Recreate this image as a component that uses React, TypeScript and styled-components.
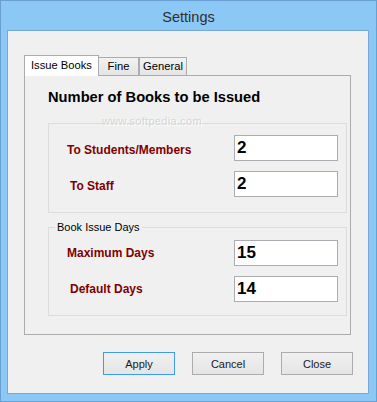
import React from 'react';
import styled, { createGlobalStyle } from 'styled-components';

const GlobalStyle = createGlobalStyle`
  html, body {
    margin: 0;
    padding: 0;
    background: #ffffff;
  }
  body {
    font-family: "Liberation Sans", Arial, sans-serif;
  }
  * {
    box-sizing: border-box;
  }
`;

const Window = styled.div`
  width: 377px;
  height: 402px;
  background-color: #8cc8f6;
  border: 1px solid #6a9fd2;
  display: flex;
  flex-direction: column;
`;

const TitleBar = styled.div`
  height: 29px;
  display: flex;
  align-items: center;
  justify-content: center;
  padding-top: 2px;
  font-size: 14.5px;
  color: #2e2e2e;
`;

const ClientArea = styled.div`
  flex: 1;
  margin: 0 7px 7px 6px;
  border: 1px solid #79a8d6;
  background-color: #f0f0f0;
  padding: 24px 15px 0 16px;
  display: flex;
  flex-direction: column;
`;

const TabStrip = styled.div`
  display: flex;
  align-items: flex-end;
  height: 21px;
  margin-bottom: -1px;
  position: relative;
  z-index: 1;
`;

const Tab = styled.div<{ $active?: boolean; $width: number; $overlap?: boolean }>`
  width: ${p => p.$width}px;
  height: ${p => (p.$active ? 21 : 19)}px;
  margin-left: ${p => (p.$overlap ? -1 : 0)}px;
  border: 1px solid #acacac;
  border-bottom: ${p => (p.$active ? 'none' : '1px solid #acacac')};
  background: ${p => (p.$active ? '#ffffff' : 'linear-gradient(#f2f2f2, #e4e4e4)')};
  font-size: 11.2px;
  color: #000;
  display: flex;
  align-items: center;
  justify-content: center;
  padding-bottom: ${p => (p.$active ? 2 : 1)}px;
`;

const TabPanel = styled.div`
  width: 327px;
  height: 260px;
  border: 1px solid #acacac;
  background-color: #f0f0f0;
  padding: 13px 3px 0 23px;
  position: relative;
  display: flex;
  flex-direction: column;
`;

const Heading = styled.div`
  font-size: 14.7px;
  line-height: 17px;
  font-weight: bold;
  color: #000;
  margin-bottom: 17px;
`;

const Watermark = styled.div`
  position: absolute;
  left: 77px;
  top: 39px;
  font-size: 11px;
  letter-spacing: 0.3px;
  color: #d6d6d6;
  text-shadow: 1px 1px 0 #ffffff;
  pointer-events: none;
`;

const GroupBox = styled.fieldset<{ $pad: string; $spaceAbove?: number }>`
  margin: ${p => p.$spaceAbove ?? 0}px 0 0 0;
  padding: ${p => p.$pad};
  border: 1px solid #dcdcdc;
  min-width: 0;
  display: flex;
  flex-direction: column;
  gap: 10px;
`;

const Legend = styled.legend`
  margin-left: 6px;
  padding: 0 2px;
  font-size: 11px;
  line-height: 14px;
  color: #000;
`;

const FieldRow = styled.div`
  display: grid;
  grid-template-columns: 1fr 104px;
  align-items: center;
  padding: 0 8px 0 18px;
`;

const FieldLabel = styled.label<{ $indent?: number; $shift?: number }>`
  font-size: 12px;
  font-weight: bold;
  color: #800000;
  padding-left: ${p => p.$indent ?? 0}px;
  margin-top: ${p => p.$shift ?? 0}px;
`;

const NumberInput = styled.input`
  width: 104px;
  height: 26px;
  border: 1px solid #abadb3;
  background: #ffffff;
  padding: 0 2px;
  font-family: "Liberation Sans", Arial, sans-serif;
  font-size: 17px;
  font-weight: bold;
  color: #000;
  outline: none;
`;

const ButtonRow = styled.div`
  display: flex;
  justify-content: flex-end;
  gap: 17px;
  margin-top: 17px;
`;

const DialogButton = styled.button<{ $focused?: boolean }>`
  width: 72px;
  height: 23px;
  border: 1px solid ${p => (p.$focused ? '#3c9af0' : '#acacac')};
  background: linear-gradient(#f0f0f0, #e5e5e5);
  font-family: "Liberation Sans", Arial, sans-serif;
  font-size: 11px;
  color: #1a1a1a;
  padding: 0;
  cursor: pointer;
`;

const studentFields = [
  { label: 'To Students/Members', value: '2', indent: 0, shift: 3 },
  { label: 'To Staff', value: '2', indent: 3, shift: 3 },
];

const dayFields = [
  { label: 'Maximum Days', value: '15', indent: 0, shift: -1 },
  { label: 'Default Days', value: '14', indent: 3, shift: 0 },
];

const App = () => {
  const renderRows = (rows: typeof studentFields) =>
    rows.map(r => (
      <FieldRow key={r.label}>
        <FieldLabel $indent={r.indent} $shift={r.shift}>{r.label}</FieldLabel>
        <NumberInput defaultValue={r.value} />
      </FieldRow>
    ));

  return (
    <>
      <GlobalStyle />
      <Window>
        <TitleBar>Settings</TitleBar>
        <ClientArea>
          <TabStrip>
            <Tab $active $width={75}>Issue Books</Tab>
            <Tab $width={41} $overlap>Fine</Tab>
            <Tab $width={48}>General</Tab>
          </TabStrip>
          <TabPanel>
            <Heading>Number of Books to be Issued</Heading>
            <Watermark>www.softpedia.com</Watermark>
            <GroupBox $pad="11px 0 15px 0">{renderRows(studentFields)}</GroupBox>
            <GroupBox $pad="6px 0 13px 0" $spaceAbove={7}>
              <Legend>Book Issue Days</Legend>
              {renderRows(dayFields)}
            </GroupBox>
          </TabPanel>
          <ButtonRow>
            <DialogButton $focused>Apply</DialogButton>
            <DialogButton>Cancel</DialogButton>
            <DialogButton>Close</DialogButton>
          </ButtonRow>
        </ClientArea>
      </Window>
    </>
  );
};

export default App;
